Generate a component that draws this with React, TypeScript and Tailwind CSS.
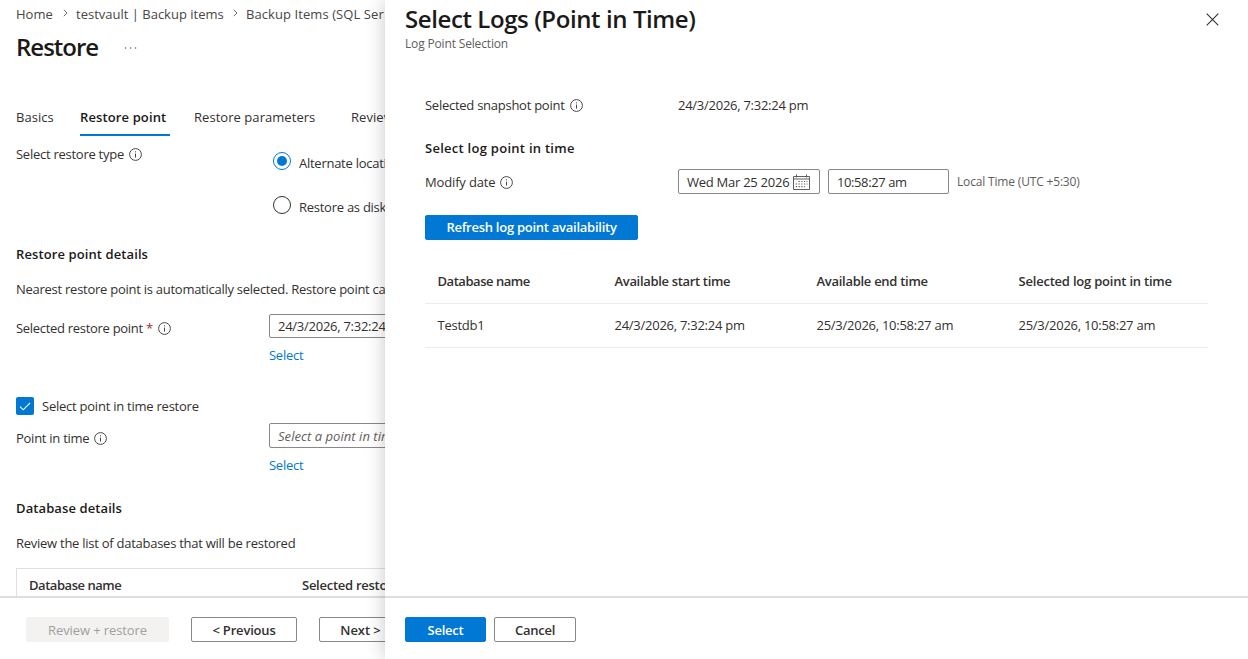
import type { ReactNode } from "react"
import clsx from "clsx"

const TABS = [
  { label: "Basics", className: "w-[64px]" },
  { label: "Restore point", className: "w-[114px]", active: true },
  { label: "Restore parameters", className: "w-[157px]" },
  { label: "Review", className: "w-[60px]" },
]

const COLUMNS = [
  { label: "Database name", className: "tracking-[-0.46px]" },
  { label: "Available start time", className: "tracking-[-0.33px]" },
  { label: "Available end time", className: "tracking-[-0.28px]" },
  { label: "Selected log point in time", className: "tracking-[-0.21px]" },
]

const ROWS = [["Testdb1", "24/3/2026, 7:32:24 pm", "25/3/2026, 10:58:27 am", "25/3/2026, 10:58:27 am"]]

function InfoIcon() {
  return (
    <svg width="13" height="13" viewBox="0 0 13 13" fill="none" className="mt-px shrink-0">
      <circle cx="6.5" cy="6.5" r="5.9" stroke="#484644" strokeWidth="1" />
      <path d="M6.5 5.6v4" stroke="#484644" strokeWidth="1" />
      <circle cx="6.5" cy="3.8" r="0.65" fill="#484644" />
    </svg>
  )
}

function Chevron() {
  return (
    <svg width="5" height="8" viewBox="0 0 5 8" fill="none" className="-mt-1 shrink-0">
      <path d="M0.8 0.8 4 4 0.8 7.2" stroke="#605e5c" strokeWidth="0.9" />
    </svg>
  )
}

function CalendarIcon() {
  return (
    <svg width="17" height="16" viewBox="0 0 17 16" fill="none" className="shrink-0">
      <path d="M0.5 2.5h16v13H0.5zM0.5 5h16" stroke="#605e5c" />
      <path d="M3.5 0.5v3M13.5 0.5v3" stroke="#605e5c" />
      <path d="M5.5 7.5h9M2.8 10h11.7M2.8 12.7h9" stroke="#605e5c" strokeWidth="1.2" strokeDasharray="1.3 1.4" />
    </svg>
  )
}

function Label({ children, className }: { children: ReactNode; className?: string }) {
  return <div className={clsx("flex shrink-0 items-center gap-[5px] leading-5", className)}>{children}</div>
}

function Button({
  children,
  variant = "default",
  className,
}: {
  children: ReactNode
  variant?: "default" | "primary" | "disabled"
  className?: string
}) {
  return (
    <button
      className={clsx(
        "flex h-[25px] shrink-0 items-center justify-center rounded-xs border",
        variant === "default" && "border-[#8a8886] bg-white font-semibold text-[#323130]",
        variant === "primary" && "border-[#0078d4] bg-[#0078d4] font-semibold text-white",
        variant === "disabled" && "border-[#f3f2f1] bg-[#f3f2f1] font-medium text-[#a19f9d]",
        className,
      )}
    >
      {children}
    </button>
  )
}

function Radio({ label, checked }: { label: string; checked?: boolean }) {
  return (
    <div className="flex h-5 items-center gap-2">
      <span
        className={clsx(
          "flex size-[18px] shrink-0 items-center justify-center rounded-full border",
          checked ? "border-[#0078d4]" : "border-[#323130]",
        )}
      >
        {checked && <span className="size-2.5 rounded-full bg-[#0078d4]" />}
      </span>
      <span className="mt-[5px]">{label}</span>
    </div>
  )
}

function RestorePage() {
  return (
    <main className="flex w-[385px] shrink-0 flex-col overflow-hidden whitespace-nowrap">
      <div className="flex h-[596px] flex-col overflow-hidden pl-4">
        <nav className="mt-[5px] flex h-5 shrink-0 items-center tracking-normal text-[#484644]">
          <span className="w-[47px] shrink-0">Home</span>
          <Chevron />
          <span className="ml-2 w-[157px] shrink-0">testvault | Backup items</span>
          <Chevron />
          <span className="ml-2 tracking-[0.08px]">Backup Items (SQL Ser</span>
        </nav>
        <header className="mt-1 flex h-9 shrink-0 items-center">
          <h1 className="w-[108px] text-2xl font-semibold tracking-[-1px] text-[#1b1a19]">Restore</h1>
          <svg width="13" height="2" viewBox="0 0 13 2" fill="#605e5c" className="mt-0.5">
            <circle cx="1.5" cy="1" r="0.8" />
            <circle cx="6.5" cy="1" r="0.8" />
            <circle cx="11.5" cy="1" r="0.8" />
          </svg>
        </header>
        <div className="mt-[42px] flex h-[29px] shrink-0 tracking-[0.05px]">
          {TABS.map((tab) => (
            <div key={tab.label} className={clsx("shrink-0", tab.className)}>
              <span
                className={clsx(
                  "block h-full leading-5",
                  tab.active && "w-[90px] border-b-2 border-[#0078d4] font-semibold tracking-[0.12px] text-[#1b1a19]",
                )}
              >
                {tab.label}
              </span>
            </div>
          ))}
        </div>

        <div className="mt-2 flex h-[74px] shrink-0">
          <Label className="h-5 w-[257px]">
            Select restore type
            <InfoIcon />
          </Label>
          <div className="mt-[7px] flex flex-col gap-6">
            <Radio label="Alternate location" checked />
            <Radio label="Restore as disks" />
          </div>
        </div>

        <h2 className="mt-[26px] leading-5 font-semibold tracking-[0.1px] text-[#1b1a19]">Restore point details</h2>
        <p className="mt-[15px] leading-5">Nearest restore point is automatically selected. Restore point can</p>

        <div className="mt-[15px] flex shrink-0">
          <Label className="mt-1 h-5 w-[253px]">
            <span className="tracking-[-0.3px]">
              Selected restore point <span className="text-[#a4262c]">*</span>
            </span>
            <InfoIcon />
          </Label>
          <div>
            <div className="h-6 w-[260px] rounded-xs border border-[#8a8886] px-2 leading-[23px]">
              24/3/2026, 7:32:24 pm
            </div>
            <a className="mt-[7px] block leading-5 text-[#0078d4]">Select</a>
          </div>
        </div>

        <div className="mt-8 flex h-[18px] shrink-0 items-center gap-2">
          <span className="flex size-[18px] items-center justify-center rounded-xs bg-[#0078d4]">
            <svg width="12" height="9" viewBox="0 0 12 9" fill="none">
              <path d="M1 4.6 4.2 7.8 11 1" stroke="white" strokeWidth="1.1" />
            </svg>
          </span>
          <span className="mt-0.5 tracking-[-0.24px]">Select point in time restore</span>
        </div>
        <div className="mt-2 flex shrink-0">
          <Label className="mt-[5px] h-5 w-[253px]">
            Point in time
            <InfoIcon />
          </Label>
          <div>
            <div className="h-[25px] w-[260px] rounded-xs border border-[#8a8886] px-2 leading-[25px] tracking-[0.05px] text-[#605e5c] italic">
              Select a point in time
            </div>
            <a className="mt-[7px] block leading-5 text-[#0078d4]">Select</a>
          </div>
        </div>

        <h2 className="mt-[23px] leading-5 font-semibold tracking-[0.1px] text-[#1b1a19]">Database details</h2>
        <p className="mt-[15px] leading-5">Review the list of databases that will be restored</p>
        <div className="mt-[15px] flex h-10 w-[700px] shrink-0 border border-[#e1dfdd] pt-1.5 pl-3 leading-5 font-semibold">
          <span className="w-[273px] tracking-[-0.46px]">Database name</span>
          <span>Selected restore point</span>
        </div>
      </div>
      <footer className="flex h-[63px] items-start border-t-2 border-[#dddddd] pt-[19px] pl-[26px]">
        <Button variant="disabled" className="w-[143px] pt-0.5 tracking-[-0.1px]">Review + restore</Button>
        <Button className="ml-[22px] w-[106px] pt-0.5 tracking-[-0.18px]">&lt; Previous</Button>
        <Button className="ml-[22px] w-[83px] pt-0.5 tracking-[-0.05px]">Next &gt;</Button>
      </footer>
    </main>
  )
}

function LogsPanel() {
  return (
    <aside className="z-10 flex flex-1 flex-col bg-white whitespace-nowrap shadow-[0_0_18px_rgba(0,0,0,0.22)]">
      <div className="flex h-[596px] flex-col pl-5">
        <header className="flex h-[52px] justify-between pr-[29px]">
          <div>
            <h1 className="mt-0.5 text-2xl leading-[34px] font-semibold tracking-[-0.41px] text-[#1b1a19]">
              Select Logs (Point in Time)
            </h1>
            <p className="text-xs leading-4 tracking-[-0.16px] text-[#605e5c]">Log Point Selection</p>
          </div>
          <svg width="13" height="13" viewBox="0 0 13 13" className="mt-[13px]" stroke="#323130" strokeWidth="1.1">
            <path d="M0.7 0.7 12.3 12.3M12.3 0.7 0.7 12.3" />
          </svg>
        </header>
        <div className="mt-[43px] flex flex-col pr-10 pl-5">
          <div className="flex h-5 items-center">
            <Label className="w-[253px]">
              Selected snapshot point
              <InfoIcon />
            </Label>
            <span className="leading-5">24/3/2026, 7:32:24 pm</span>
          </div>
          <h2 className="mt-[23px] leading-5 font-semibold tracking-[0.27px] text-[#1b1a19]">Select log point in time</h2>
          <div className="mt-[11px] flex h-[25px] items-start">
            <Label className="mt-[3px] w-[253px]">
              <span className="tracking-[-0.15px]">Modify date</span>
              <InfoIcon />
            </Label>
            <div className="flex h-[25px] w-[142px] items-center justify-between rounded-xs border border-[#8a8886] pr-[9px] pl-2">
              <span className="leading-5">Wed Mar 25 2026</span>
              <CalendarIcon />
            </div>
            <div className="ml-2 flex h-[25px] w-[121px] items-center rounded-xs border border-[#8a8886] pl-2">
              <span className="leading-5 tracking-[-0.4px]">10:58:27 am</span>
            </div>
            <span className="ml-2 text-xs leading-[26px] tracking-[-0.17px] text-[#605e5c]">Local Time (UTC +5:30)</span>
          </div>
          <Button variant="primary" className="mt-[21px] w-[213px]">Refresh log point availability</Button>
          <div className="mt-5">
            <div className="grid h-[44px] grid-cols-[177px_202px_202px_1fr] items-center border-b border-[#edebe9] pl-[12.5px] font-semibold text-[#323130]">
              {COLUMNS.map((column) => (
                <span key={column.label} className={column.className}>
                  {column.label}
                </span>
              ))}
            </div>
            {ROWS.map((row) => (
              <div
                key={row[0]}
                className="grid h-[44px] grid-cols-[177px_202px_202px_1fr] items-center border-b border-[#edebe9] pl-[12.5px]"
              >
                {row.map((cell, i) => (
                  <span key={i}>{cell}</span>
                ))}
              </div>
            ))}
          </div>
        </div>
      </div>
      <footer className="flex h-[63px] items-start gap-2 border-t-2 border-[#dddddd] pt-[19px] pl-5">
        <Button variant="primary" className="w-[81px] pt-0.5">Select</Button>
        <Button className="w-[82px] pt-0.5">Cancel</Button>
      </footer>
    </aside>
  )
}

export default function App() {
  return (
    <div className="flex h-[659px] w-[1248px] overflow-hidden bg-white font-['Open_Sans',sans-serif] text-[13px] tracking-[-0.26px] text-[#323130]">
      <RestorePage />
      <LogsPanel />
    </div>
  )
}
